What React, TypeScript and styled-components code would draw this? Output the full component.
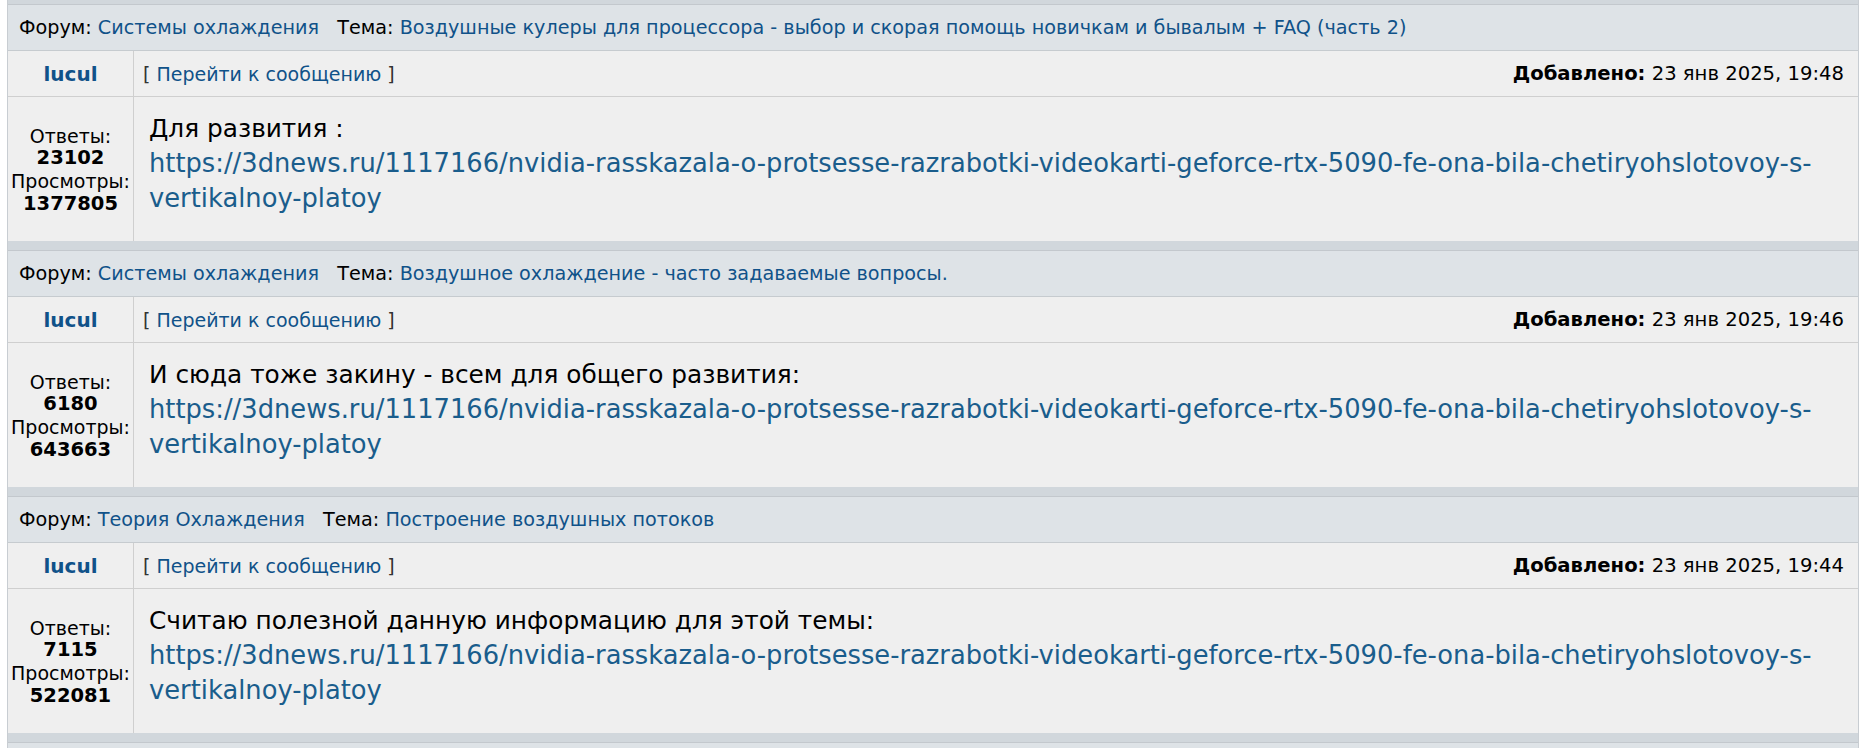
import React from "react";
import styled, { createGlobalStyle } from "styled-components";

const GlobalStyle = createGlobalStyle`
  html, body { margin: 0; padding: 0; background: #ffffff; }
  body { font-family: "DejaVu Sans", Verdana, sans-serif; color: #000; }
`;

const Page = styled.div`
  padding-left: 7px;
  width: 1852px;
`;

const Table = styled.div`
  border-left: 1px solid #c8cdd2;
  border-right: 1px solid #c8cdd2;
  display: flex;
  flex-direction: column;
`;

const Spacer = styled.div<{ $h: number }>`
  height: ${(p) => p.$h}px;
  background: #d1d7dc;
  border-bottom: 1px solid #c3c8cd;
`;

const HeaderRow = styled.div`
  height: 45px;
  background: #dee3e7;
  border-bottom: 1px solid #c6cbcf;
  display: flex;
  align-items: center;
  padding-left: 11px;
  font-size: 19.2px;
`;

const HeaderText = styled.span`
  white-space: pre;
`;

const HeadLink = styled.a`
  color: #105289;
  text-decoration: none;
`;

const Grid = styled.div<{ $h: number; $border?: boolean }>`
  display: grid;
  grid-template-columns: 126px 1fr;
  height: ${(p) => p.$h}px;
  background: #efefef;
  border-bottom: ${(p) => (p.$border ? "1px solid #cfcfcf" : "none")};
`;

const LeftCell = styled.div`
  border-right: 1px solid #cfcfcf;
  display: flex;
  flex-direction: column;
  align-items: center;
  justify-content: center;
  text-align: center;
`;

const Author = styled.a`
  color: #105289;
  font-weight: bold;
  font-size: 20px;
  text-decoration: none;
`;

const MetaCell = styled.div`
  display: flex;
  align-items: center;
  justify-content: space-between;
  padding: 0 14px 0 9px;
  font-size: 19px;
`;

const Bracket = styled.span`
  color: #333;
`;

const JumpLink = styled.a`
  color: #105289;
  text-decoration: none;
`;

const Added = styled.span`
  color: #000;
  font-size: 19.6px;
`;

const Bold = styled.b`
  font-weight: bold;
`;

const Stats = styled.div`
  font-size: 19px;
  line-height: 22.7px;
  padding-top: 2px;
`;

const Num = styled.div`
  font-weight: bold;
  font-size: 19.5px;
`;

const PostCell = styled.div`
  padding: 14px 12px 0 15px;
  font-size: 24.8px;
  line-height: 35px;
`;

const PostLink = styled.a`
  color: #1a5d8c;
  font-size: 25.75px;
  text-decoration: none;
  overflow-wrap: break-word;
`;

type Post = {
  forum: string;
  topic: string;
  time: string;
  replies: string;
  views: string;
  text: string;
};

const URL =
  "https://3dnews.ru/1117166/nvidia-rasskazala-o-protsesse-razrabotki-videokarti-geforce-rtx-5090-fe-ona-bila-chetiryohslotovoy-s-vertikalnoy-platoy";

const posts: Post[] = [
  {
    forum: "Системы охлаждения",
    topic: "Воздушные кулеры для процессора - выбор и скорая помощь новичкам и бывалым + FAQ (часть 2)",
    time: "23 янв 2025, 19:48",
    replies: "23102",
    views: "1377805",
    text: "Для развития :",
  },
  {
    forum: "Системы охлаждения",
    topic: "Воздушное охлаждение - часто задаваемые вопросы.",
    time: "23 янв 2025, 19:46",
    replies: "6180",
    views: "643663",
    text: "И сюда тоже закину - всем для общего развития:",
  },
  {
    forum: "Теория Охлаждения",
    topic: "Построение воздушных потоков",
    time: "23 янв 2025, 19:44",
    replies: "7115",
    views: "522081",
    text: "Считаю полезной данную информацию для этой темы:",
  },
];

const Block: React.FC<{ p: Post }> = ({ p }) => (
  <>
    <HeaderRow>
      <HeaderText>
        {"Форум: "}
        <HeadLink href="#">{p.forum}</HeadLink>
        {"\u00a0\u00a0\u00a0Тема: "}
        <HeadLink href="#">{p.topic}</HeadLink>
      </HeaderText>
    </HeaderRow>
    <Grid $h={45} $border>
      <LeftCell>
        <Author href="#">lucul</Author>
      </LeftCell>
      <MetaCell>
        <span>
          <Bracket>[ </Bracket>
          <JumpLink href="#">Перейти к сообщению</JumpLink>
          <Bracket> ]</Bracket>
        </span>
        <Added>
          <Bold>Добавлено:</Bold> {p.time}
        </Added>
      </MetaCell>
    </Grid>
    <Grid $h={144}>
      <LeftCell>
        <Stats>
          <div>Ответы:</div>
          <Num>{p.replies}</Num>
          <div>Просмотры:</div>
          <Num>{p.views}</Num>
        </Stats>
      </LeftCell>
      <PostCell>
        <div>{p.text}</div>
        <PostLink href="#">{URL}</PostLink>
      </PostCell>
    </Grid>
    <Spacer $h={9} />
  </>
);

export default function App() {
  return (
    <>
      <GlobalStyle />
      <Page>
        <Table>
          <Spacer $h={4} />
          {posts.map((p, i) => (
            <Block key={i} p={p} />
          ))}
          <HeaderRow />
        </Table>
      </Page>
    </>
  );
}
